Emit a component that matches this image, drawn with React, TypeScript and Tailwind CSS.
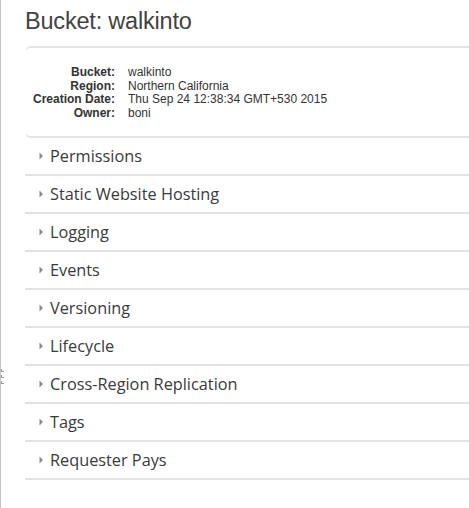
import React from "react";

const sections = [
  "Permissions",
  "Static Website Hosting",
  "Logging",
  "Events",
  "Versioning",
  "Lifecycle",
  "Cross-Region Replication",
  "Tags",
  "Requester Pays",
];

const info: [string, string][] = [
  ["Bucket:", "walkinto"],
  ["Region:", "Northern California"],
  ["Creation Date:", "Thu Sep 24 12:38:34 GMT+530 2015"],
  ["Owner:", "boni"],
];

export default function App() {
  return (
    <div className="relative flex min-h-[508px] w-[469px] overflow-hidden bg-white">
      <div className="w-[1px] shrink-0 bg-[#c4c4c4]" />
      <div className="absolute left-[1px] top-[369px] flex flex-col gap-[3px]">
        {[0, 1, 2].map((i) => (
          <div key={i} className="h-[3px] w-[3px] border-b border-l border-[#999]" />
        ))}
      </div>
      <div className="flex min-w-0 flex-1 flex-col pl-[24px]">
        <h1
          className="mt-[7px] h-[39px] text-[23.5px] leading-[28px] tracking-[-0.2px] text-[#424242]"
          style={{ fontFamily: "Arial, 'Liberation Sans', sans-serif" }}
        >
          Bucket: walkinto
        </h1>
        <div
          className="mr-[-12px] rounded-[6px] border-y-2 border-[#e3e3e3] pb-[15px] pt-[18px]"
          style={{ fontFamily: "Arial, 'Liberation Sans', sans-serif" }}
        >
          <div className="grid grid-cols-[90px_1fr] gap-x-[13px] text-[12px] leading-[13.7px] text-[#333]">
            {info.map(([k, v]) => (
              <React.Fragment key={k}>
                <div className="text-right font-bold text-[#333]">{k}</div>
                <div>{v}</div>
              </React.Fragment>
            ))}
          </div>
        </div>
        <div style={{ fontFamily: "'Open Sans', sans-serif" }}>
          {sections.map((s) => (
            <div
              key={s}
              className="flex h-[38px] items-center border-b-2 border-[#e3e3e3] pl-[14px]"
            >
              <svg width="5" height="8" viewBox="0 0 5 8" className="mr-[6px]">
                <path d="M0.5 0.5 L4 4 L0.5 7.5 Z" fill="#8a8a8a" />
              </svg>
              <span className="text-[16.3px] leading-[20px] text-[#3a3a3a]">{s}</span>
            </div>
          ))}
        </div>
      </div>
    </div>
  );
}
